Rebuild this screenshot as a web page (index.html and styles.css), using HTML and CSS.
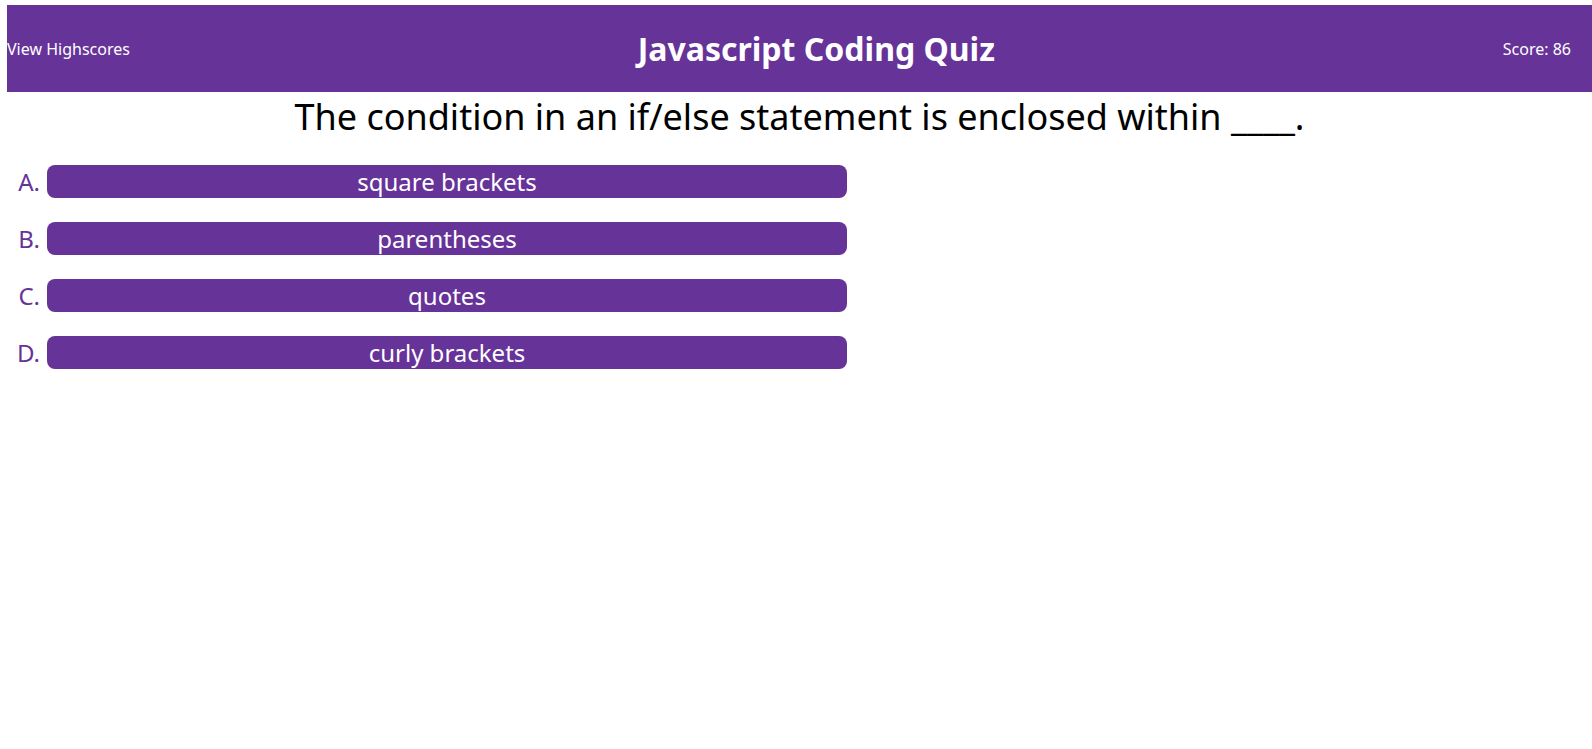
FILE: index.html
```html
<!DOCTYPE html>
<html lang="en">
<head>
<meta charset="utf-8">
<title>Javascript Coding Quiz</title>
<link rel="stylesheet" href="styles.css">
</head>
<body>
<header class="topbar">
  <a class="highscores">View Highscores</a>
  <h1 class="title">Javascript Coding Quiz</h1>
  <span class="score">Score: 86</span>
</header>
<main class="quiz">
  <h2 class="question">The condition in an if/else statement is enclosed within ____.</h2>
  <ol class="choices">
    <li class="choice"><span class="letter">A.</span><button class="answer">square brackets</button></li>
    <li class="choice"><span class="letter">B.</span><button class="answer">parentheses</button></li>
    <li class="choice"><span class="letter">C.</span><button class="answer">quotes</button></li>
    <li class="choice"><span class="letter">D.</span><button class="answer">curly brackets</button></li>
  </ol>
</main>
</body>
</html>
```
FILE: styles.css
```css
html, body {
  margin: 0;
  padding: 0;
  background: #ffffff;
  overflow: hidden;
}
body {
  font-family: "Noto Sans", "Open Sans", sans-serif;
  color: #000000;
  padding: 5px 0 0 7px;
}
.topbar {
  display: flex;
  align-items: center;
  justify-content: space-between;
  height: 87px;
  background: #663399;
  color: #ffffff;
  padding-right: 21px;
}
.highscores {
  font-size: 16px;
  color: #ffffff;
}
.title {
  margin: 0;
  font-size: 32px;
  font-weight: 700;
}
.score {
  font-size: 16px;
}
.question {
  margin: 0;
  font-size: 36px;
  font-weight: 400;
  text-align: center;
  line-height: 49px;
}
.choices {
  list-style: none;
  margin: 24px 0 0 0;
  padding: 0;
  display: flex;
  flex-direction: column;
  gap: 24px;
}
.choice {
  display: flex;
  align-items: center;
  gap: 7px;
}
.letter {
  width: 33px;
  text-align: right;
  font-size: 24px;
  color: #663399;
  line-height: 33px;
}
.answer {
  width: 800px;
  height: 33px;
  border: none;
  border-radius: 8px;
  background: #663399;
  color: #ffffff;
  font-family: "Noto Sans", "Open Sans", sans-serif;
  font-size: 24px;
  line-height: 33px;
  padding: 0;
}
```
